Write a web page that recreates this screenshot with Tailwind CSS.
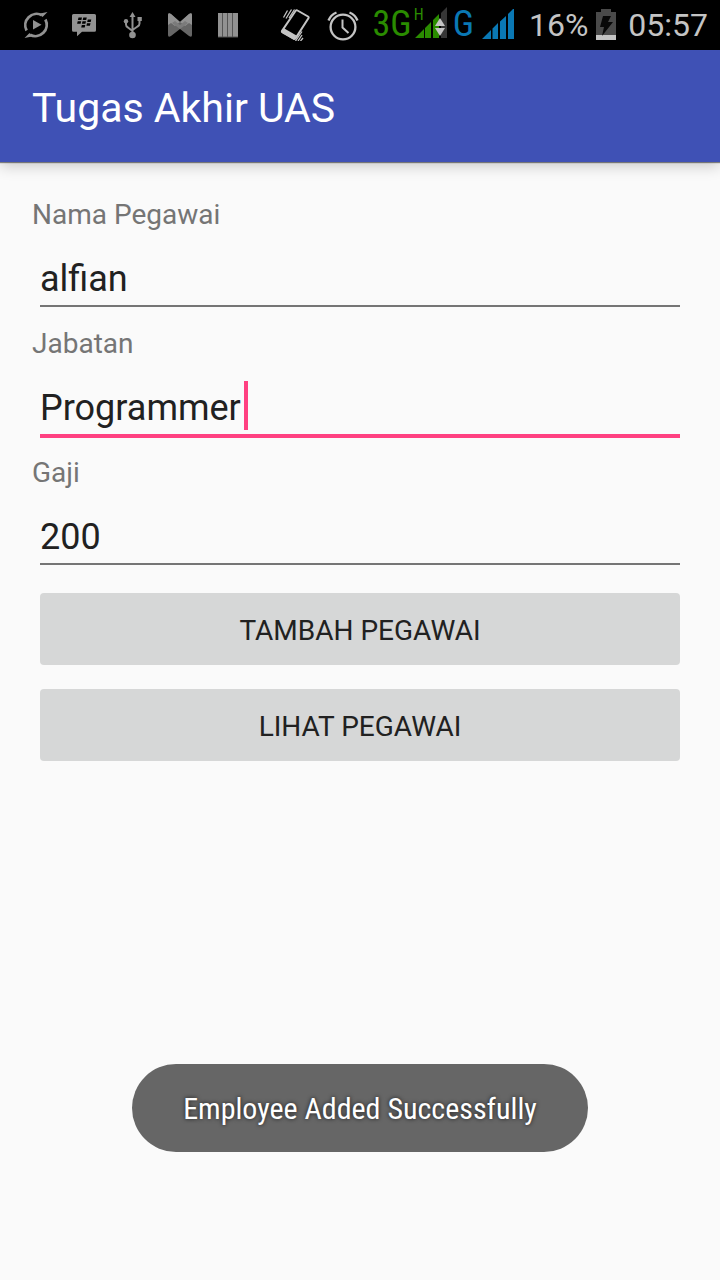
<!DOCTYPE html>
<html lang="id">
<head>
<meta charset="utf-8">
<meta name="viewport" content="width=device-width, initial-scale=1">
<title>Tugas Akhir UAS</title>
<script src="https://cdn.jsdelivr.net/npm/@tailwindcss/browser@4"></script>
</head>
<body class="min-h-screen bg-[#fafafa] font-['Roboto',sans-serif] text-[#212121]">
<div class="relative flex min-h-screen flex-col">

  <!-- Status bar -->
  <div class="flex h-[50px] items-center justify-between bg-black pr-3 pl-5 text-[32px] leading-none text-[#c4c4c4]">
    <div class="flex items-center gap-4">
      <svg class="size-8" viewBox="0 0 32 32" fill="none" stroke="#929292" stroke-width="2.800">
        <path d="M6.600 21.500A11.300 11.300 0 0 1 22 6.300M25.400 10.500A11.300 11.300 0 0 1 10 25.700"/>
        <path d="M20 4.500l7.500-1.500-5 5zM12 27.500l-7.500 1.500 5-5z" fill="#929292" stroke="none"/>
        <path d="M13 11v9.500l8.500-4.700z" fill="#929292" stroke="none"/>
      </svg>
      <svg class="size-8" viewBox="0 0 32 32" fill="#929292">
        <path d="M5.500 5h21a1.500 1.500 0 0 1 1.500 1.500v14.700a1.500 1.500 0 0 1-1.500 1.500H14l-5 4.500v-4.500H5.500A1.500 1.500 0 0 1 4 21.200v-14.700A1.500 1.500 0 0 1 5.500 5z"/>
        <path d="M10.500 8.500h3.500l-.6 2.400h-3.500zM15.300 8.500h3.500l-.6 2.400h-3.500zM9.700 12.300h3.500l-.6 2.400h-3.500zM14.500 12.300h3.500l-.6 2.400h-3.500zM19.800 10.500h3.500l-.6 2.400h-3.500zM19 14.300h3.500l-.6 2.400h-3.500zM13.800 16h3.500l-.6 2.400h-3.500z" fill="#000"/>
      </svg>
      <svg class="size-8" viewBox="0 0 32 32" fill="none" stroke="#929292" stroke-width="2">
        <path d="M16.500 6v22M10 13v2.500q0 2 2 3l4.500 3.500M23.500 11v3.500q0 2-2 3l-5 3.500"/>
        <path d="M16.500 3l3 5h-6zM21.500 8h4.300v4h-4.300z" fill="#929292" stroke="none"/>
        <circle cx="10" cy="12.300" r="2.200" fill="#929292" stroke="none"/>
        <circle cx="16.500" cy="26" r="3.300" fill="#929292" stroke="none"/>
      </svg>
      <svg class="size-8" viewBox="0 0 32 32">
        <path d="M4 6q0-3 3-1l9 8 9-8q3-2 3 1v20q0 3-3 1l-9-7-9 7q-3 2-3-1z" fill="#666"/>
        <path d="M4 6q0-3 3-1l9 8-5 4-4-3-3 2zM28 6q0-3-3-1l-9 8 5 4 4-3 3 2z" fill="#929292"/>
        <path d="M11 12l5 4 5-4 3 2-8 6-8-6z" fill="#7b7b7b"/>
      </svg>
      <svg class="size-8" viewBox="0 0 32 32">
        <path d="M6 4h20v24.500H6z" fill="#555"/>
        <path d="M6 4h4v23.500H6zM11 4h4v23.500h-4zM16 4h4v23.500h-4zM21 4h5v23.500h-5z" fill="#929292"/>
      </svg>
    </div>
    <div class="flex items-center">
      <svg class="mr-4 size-8" viewBox="0 0 32 32" fill="none" stroke="#c4c4c4">
        <path d="M18.500 1.500l10.500 6q1 .7.400 1.700L16.500 29.300q-.8 1-1.800.4L3.500 23.300q-1-.7-.3-1.700L16.500 2q.9-1.200 2-.5z" stroke-width="2"/>
        <path d="M4.500 19l13 7.500-2.500 4.500L2 23z" fill="#c4c4c4" stroke="none"/>
        <path d="M4.500 8.500l4-7M7 9.500l5.500-9M10 9l5.500-8.500M16.500 32l6.500-9.500M19 32l4-6M21.500 32l2.500-3" stroke-width="1.300"/>
      </svg>
      <svg class="mr-[14px] size-8" viewBox="0 0 32 32" fill="none" stroke="#c4c4c4" stroke-width="2.300">
        <circle cx="16" cy="18" r="12.400"/>
        <path d="M15.500 10.500v8l6 5.500" stroke-width="2"/>
        <path d="M1.500 11.500Q3.500 6 9.500 3.500M30.500 11.500Q28.500 6 22.500 3.500"/>
      </svg>
      <span class="pb-[2px] font-['Roboto_Condensed','Open_Sans',sans-serif] text-[36px] text-[#2a8c00]">3G</span>
      <div class="relative ml-[2px]">
        <svg class="h-9 w-[34px]" viewBox="0 0 34 36">
          <path d="M33 0v31h-6V6z" fill="#363636"/>
          <path d="M1 31l9-9v9zM11 31V21l6-6v16zM19 31V13l6-6v24z" fill="#2a8c00"/>
          <path d="M26 11l5 8H21zM21 21h10l-5 8z" fill="#c4c4c4"/>
        </svg>
        <span class="absolute top-0 left-0 font-['Roboto_Condensed',sans-serif] text-[16px] leading-4 text-[#2a8c00]">H</span>
      </div>
      <span class="ml-[5px] pb-[2px] font-['Roboto_Condensed','Open_Sans',sans-serif] text-[36px] text-[#0a78b4]">G</span>
      <svg class="ml-2 h-8 w-8" viewBox="0 0 32 32" fill="#0a78b4">
        <path d="M0 30l9-9v9zM10.500 30V19.500L16 14v16zM18 30V12.500L24 7v23zM26 30V5l6-6v31z"/>
      </svg>
      <span class="ml-[15px]">16%</span>
      <svg class="mx-2 h-8 w-5" viewBox="0 0 20 32">
        <path d="M5 0h10v3h5v28H0V3h5z" fill="#4a4a4a"/>
        <path d="M0 26h20v5H0z" fill="#c4c4c4"/>
        <path d="M7 7h8l-3 6h5L6 27l2-9H4z" fill="#080808"/>
      </svg>
      <span class="ml-1">05:57</span>
    </div>
  </div>

  <!-- App bar -->
  <header class="z-10 flex h-28 items-center bg-[#3f51b5] px-8 pt-1 shadow-[0_1px_1px_rgba(0,0,0,0.45),0_4px_14px_rgba(0,0,0,0.2)]">
    <h1 class="text-[41px] leading-none text-white">Tugas Akhir UAS</h1>
  </header>

  <!-- Employee form -->
  <main class="px-8 pt-8">
    <form class="flex flex-col">
      <label for="nama" class="text-[28px] leading-[42px] text-[#757575]">Nama Pegawai</label>
      <div class="mx-2 mt-4 mb-4 border-b-2 border-[#757575]">
        <input id="nama" type="text" value="alfian" class="block h-[53px] w-full bg-transparent text-[36px] outline-none">
      </div>
      <label for="jabatan" class="text-[28px] leading-[42px] text-[#757575]">Jabatan</label>
      <div class="relative mx-2 mt-4 mb-[14px] border-b-4 border-[#ff4081]">
        <input id="jabatan" type="text" value="Programmer" class="block h-[53px] w-full bg-transparent text-[36px] caret-[#ff4081] outline-none">
        <span class="absolute top-0 left-[204px] h-[49px] w-1 bg-[#ff4081]"></span>
      </div>
      <label for="gaji" class="text-[28px] leading-[42px] text-[#757575]">Gaji</label>
      <div class="mx-2 mt-4 mb-4 border-b-2 border-[#757575]">
        <input id="gaji" type="text" inputmode="numeric" value="200" class="block h-[53px] w-full bg-transparent text-[36px] outline-none">
      </div>
      <button type="button" class="mx-2 my-3 h-[72px] rounded bg-[#d6d7d7] pt-1 text-[28px]">TAMBAH PEGAWAI</button>
      <button type="button" class="mx-2 my-3 h-[72px] rounded bg-[#d6d7d7] pt-1 text-[28px]">LIHAT PEGAWAI</button>
    </form>
  </main>

  <!-- Toast -->
  <div class="absolute inset-x-0 bottom-32 flex justify-center">
    <div role="status" class="flex h-[88px] items-center rounded-full bg-[#666666] px-[51px] font-['Roboto_Condensed','Roboto',sans-serif] text-[30px] text-white [text-shadow:0_0_4px_rgba(0,0,0,0.75)]">Employee Added Successfully</div>
  </div>
</div>
</body>
</html>
